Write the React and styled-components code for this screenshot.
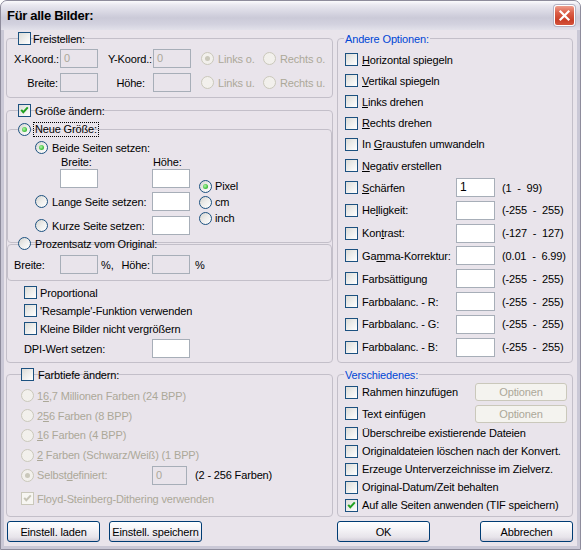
import React from "react";
import styled, { createGlobalStyle } from "styled-components";

const GlobalStyle = createGlobalStyle`
  html, body {
    margin: 0;
    padding: 0;
    background: #ffffff;
  }
  body {
    font-family: "Liberation Sans", Arial, sans-serif;
    font-size: 11px;
    letter-spacing: -0.15px;
    color: #000;
  }
  * {
    box-sizing: border-box;
  }
`;

const DIALOG_BG = "#e9e4eb";
const DISABLED = "#aca899";

const Window = styled.div`
  width: 581px;
  height: 550px;
  display: flex;
  flex-direction: column;
  border: 1px solid #8e8c9c;
  border-radius: 7px 7px 0 0;
  background: #cac8d6;
  overflow: hidden;
`;

const TitleBar = styled.div`
  flex: none;
  height: 29px;
  display: flex;
  align-items: center;
  justify-content: space-between;
  padding: 0 5px 0 6px;
  background: linear-gradient(
    to bottom,
    #fbfbfd 0%,
    #e9e8f0 14%,
    #d7d6e2 40%,
    #cbcad8 58%,
    #d3d2df 80%,
    #e2e1ea 100%
  );
`;

const TitleText = styled.div`
  font-weight: bold;
  font-size: 13px;
  letter-spacing: -0.3px;
  color: #000;
`;

const CloseButton = styled.div`
  width: 21px;
  height: 21px;
  border: 1px solid #fff;
  border-radius: 3px;
  display: flex;
  align-items: center;
  justify-content: center;
  background: linear-gradient(to bottom, #ee9d8c 0%, #dc5f48 35%, #c93f28 75%, #d5543c 100%);
  box-shadow: 0 0 0 1px #b4b2c2;
`;

const Client = styled.div`
  flex: 1;
  margin: 0 3px 3px;
  background: ${DIALOG_BG};
  display: grid;
  grid-template-columns: 327px 236px;
  column-gap: 4px;
  row-gap: 4px;
  align-content: start;
  padding: 8px 0 0 2px;
`;

const Column = styled.div`
  display: flex;
  flex-direction: column;
`;

const Group = styled.div`
  position: relative;
  flex: none;
  height: ${(p) => p.$h}px;
  margin-top: ${(p) => p.$mt || 0}px;
  border: 1px solid #c3bfc9;
  border-radius: 4px;
`;

const GroupTitle = styled.div`
  position: absolute;
  top: ${(p) => (p.$top !== undefined ? p.$top : -7)}px;
  left: ${(p) => p.$left}px;
  height: 13px;
  display: flex;
  align-items: center;
  gap: ${(p) => (p.$gap !== undefined ? p.$gap : 3)}px;
  white-space: nowrap;
  color: ${(p) => (p.$blue ? "#0046d5" : "#000")};
  background: ${(p) => (p.$blue ? DIALOG_BG : "transparent")};
  padding: ${(p) => (p.$blue ? "0 1px" : "0")};
`;

const Box = styled.span`
  flex: none;
  width: 13px;
  height: 13px;
  display: inline-flex;
  align-items: center;
  justify-content: center;
  border: 1px solid ${(p) => (p.$disabled ? "#cac8bb" : "#1c5180")};
  background: ${(p) =>
    p.$disabled
      ? "#f7f6f2"
      : "linear-gradient(135deg, #dcdcd7 0%, #ececea 45%, #ffffff 100%)"};
`;

const Circle = styled.span`
  flex: none;
  width: 13px;
  height: 13px;
  border-radius: 50%;
  display: inline-flex;
  align-items: center;
  justify-content: center;
  border: 1px solid ${(p) => (p.$disabled ? "#cac8bb" : "#1c5180")};
  background: ${(p) =>
    p.$disabled
      ? "#f2f0ec"
      : "linear-gradient(135deg, #d6d5d0 0%, #eeeeec 50%, #ffffff 100%)"};
`;

const Dot = styled.span`
  width: 5px;
  height: 5px;
  border-radius: 50%;
  background: ${(p) =>
    p.$disabled ? "#cac8bb" : "radial-gradient(circle at 40% 40%, #b4f5ac 0%, #4cc748 55%, #1f9c1f 100%)"};
`;

const CheckBox = ({ checked, disabled }) => (
  <Box $disabled={disabled}>
    {checked && (
      <svg width="11" height="11" viewBox="0 0 11 11">
        <path
          d="M2.2 4.8 L4.3 7.2 L8.8 2.4"
          fill="none"
          stroke={disabled ? "#c6c4b6" : "#21a121"}
          strokeWidth="2"
        />
      </svg>
    )}
  </Box>
);

const Radio = ({ checked, disabled }) => (
  <Circle $disabled={disabled}>{checked && <Dot $disabled={disabled} />}</Circle>
);

const Focus = styled.span`
  outline: 1px dotted #000;
  outline-offset: 0;
  padding: 0 1px;
  line-height: 13px;
`;

const Opt = styled.div`
  display: flex;
  align-items: center;
  gap: ${(p) => (p.$gap !== undefined ? p.$gap : 4)}px;
  height: ${(p) => (p.$h ? `${p.$h}px` : "auto")};
  flex: none;
  white-space: nowrap;
  color: ${(p) => (p.$disabled ? DISABLED : "inherit")};
`;

const TextBox = styled.div`
  flex: none;
  width: ${(p) => p.$w || 38}px;
  height: 19px;
  margin-left: ${(p) => p.$ml || 0}px;
  border: 1px solid #a7aeb8;
  background: ${(p) => (p.$disabled ? "transparent" : "#fff")};
  color: ${(p) => (p.$disabled ? DISABLED : "#000")};
  font-size: ${(p) => (p.$big ? "12px" : "11px")};
  padding: 0 3px;
  line-height: 17px;
`;

const Lbl = styled.div`
  white-space: nowrap;
  align-self: center;
  text-align: ${(p) => (p.$right ? "right" : "left")};
  padding-left: ${(p) => p.$pl || 0}px;
  padding-right: ${(p) => p.$pr || 0}px;
  color: ${(p) => (p.$disabled ? DISABLED : "inherit")};
`;

const Button = styled.button`
  width: ${(p) => p.$w || 93}px;
  height: ${(p) => p.$h || 21}px;
  padding: 0;
  font: inherit;
  letter-spacing: inherit;
  color: ${(p) => (p.disabled ? DISABLED : "#000")};
  border: 1px solid ${(p) => (p.disabled ? "#cac8bb" : "#003c74")};
  border-radius: 3px;
  background: ${(p) =>
    p.disabled
      ? "#f4f3ef"
      : "linear-gradient(to bottom, #ffffff 0%, #f6f5f8 35%, #e7e4ea 80%, #d2cdd8 100%)"};
`;

/* Freistellen */
const CropGrid = styled.div`
  display: grid;
  grid-template-columns: 53px 38px 55px 38px 10px 62px auto;
  grid-auto-rows: 19px;
  row-gap: 5px;
  align-items: center;
  padding-top: 10px;
`;

/* Neue Größe */
const SizeGrid = styled.div`
  display: grid;
  grid-template-columns: 144px 38px auto;
  grid-template-rows: 13px 15px 23px 24px 19px;
  padding-top: 11px;
`;

const SizeRadio = styled(Opt)`
  grid-column: ${(p) => p.$span || "1"};
  padding-left: 27px;
  height: ${(p) => p.$h || 13}px;
`;

const UnitList = styled.div`
  grid-column: 3;
  grid-row: 3 / 6;
  padding: 9px 0 0 9px;
  display: flex;
  flex-direction: column;
`;

const PercentGrid = styled.div`
  display: grid;
  grid-template-columns: 52px 38px 54px 38px auto;
  align-items: center;
  height: 19px;
  margin-top: 10px;
`;

const PercentMid = styled.div`
  display: flex;
  justify-content: space-between;
  padding: 0 2px 0 3px;
`;

const CheckList = styled.div`
  display: flex;
  flex-direction: column;
  gap: 5px;
  margin-top: 5px;
  padding-left: 17px;
`;

const DpiRow = styled.div`
  display: grid;
  grid-template-columns: 145px 38px;
  align-items: center;
  margin-top: 4px;
`;

/* Farbtiefe */
const ColorList = styled.div`
  display: flex;
  flex-direction: column;
  padding: 11px 0 0 14px;
`;

const CustomRow = styled.div`
  display: grid;
  grid-template-columns: 131px 35px auto;
  align-items: center;
  height: 19.8px;
`;

/* Right column */
const OptList = styled.div`
  display: flex;
  flex-direction: column;
  padding: 10px 0 0 7px;
`;

const AdjRow = styled.div`
  display: grid;
  grid-template-columns: 111px 39px auto;
  align-items: center;
  height: 22.8px;
`;

const Range = styled.div`
  white-space: pre;
  padding-left: 7px;
`;

const MiscList = styled.div`
  display: flex;
  flex-direction: column;
  padding: 6px 5px 0 7px;
`;

const MiscRow = styled.div`
  display: flex;
  align-items: center;
  justify-content: space-between;
  height: ${(p) => p.$h}px;
`;

const ButtonBar = styled.div`
  display: flex;
  gap: 9px;
  justify-content: ${(p) => (p.$spread ? "space-between" : "flex-start")};
  padding-left: ${(p) => (p.$spread ? 0 : 1)}px;
`;

const adjustments = [
  { label: <><u>S</u>chärfen</>, value: "1", range: "(1  -  99)" },
  { label: <>He<u>l</u>ligkeit:</>, range: "(-255  -  255)" },
  { label: <>Kon<u>t</u>rast:</>, range: "(-127  -  127)" },
  { label: <>Ga<u>m</u>ma-Korrektur:</>, range: "(0.01  -  6.99)" },
  { label: <>Farbsättigung</>, range: "(-255  -  255)" },
  { label: <>Farbbalanc. - R:</>, range: "(-255  -  255)" },
  { label: <>Farbbalanc. - G:</>, range: "(-255  -  255)" },
  { label: <>Farbbalanc. - B:</>, range: "(-255  -  255)" },
];

const flips = [
  <><u>H</u>orizontal spiegeln</>,
  <><u>V</u>ertikal spiegeln</>,
  <><u>L</u>inks drehen</>,
  <><u>R</u>echts drehen</>,
  <>In <u>G</u>raustufen umwandeln</>,
  <><u>N</u>egativ erstellen</>,
];

const misc = [
  "Überschreibe existierende Dateien",
  "Originaldateien löschen nach der Konvert.",
  "Erzeuge Unterverzeichnisse im Zielverz.",
  "Original-Datum/Zeit behalten",
];

export default function App() {
  return (
    <>
      <GlobalStyle />
      <Window>
        <TitleBar>
          <TitleText>Für alle Bilder:</TitleText>
          <CloseButton>
            <svg width="13" height="13" viewBox="0 0 13 13">
              <path d="M2.5 2.5 L10.5 10.5 M10.5 2.5 L2.5 10.5" stroke="#fff" strokeWidth="2.2" strokeLinecap="square" />
            </svg>
          </CloseButton>
        </TitleBar>

        <Client>
          <Column>
            <Group $h={60}>
              <GroupTitle $left={11} $gap={2}>
                <CheckBox />
                Freistellen:
              </GroupTitle>
              <CropGrid>
                <Lbl $right $pr={1}>X-Koord.:</Lbl>
                <TextBox $disabled>0</TextBox>
                <Lbl $right $pr={1}>Y-Koord.:</Lbl>
                <TextBox $disabled>0</TextBox>
                <span />
                <Opt $disabled>
                  <Radio checked disabled />
                  Links o.
                </Opt>
                <Opt $disabled>
                  <Radio disabled />
                  Rechts o.
                </Opt>
                <Lbl $right $pr={2}>Breite:</Lbl>
                <TextBox $disabled />
                <Lbl $right $pr={8}>Höhe:</Lbl>
                <TextBox $disabled />
                <span />
                <Opt $disabled>
                  <Radio disabled />
                  Links u.
                </Opt>
                <Opt $disabled>
                  <Radio disabled />
                  Rechts u.
                </Opt>
              </CropGrid>
            </Group>

            <Group $h={253} $mt={12}>
              <GroupTitle $left={11} $gap={4}>
                <CheckBox checked />
                Größe ändern:
              </GroupTitle>

              <Group $h={114} $mt={18}>
                <GroupTitle $left={10} $gap={3}>
                  <Radio checked />
                  <Focus>Neue Größe:</Focus>
                </GroupTitle>
                <SizeGrid>
                  <SizeRadio $span="1 / 4">
                    <Radio checked />
                    Beide Seiten setzen:
                  </SizeRadio>
                  <Lbl $pl={53}>Breite:</Lbl>
                  <Lbl $pl={1}>Höhe:</Lbl>
                  <span />
                  <TextBox $ml={52} />
                  <TextBox />
                  <UnitList>
                    <Opt $h={16} $gap={3}>
                      <Radio checked />
                      Pixel
                    </Opt>
                    <Opt $h={16} $gap={3}>
                      <Radio />
                      cm
                    </Opt>
                    <Opt $h={16} $gap={3}>
                      <Radio />
                      inch
                    </Opt>
                  </UnitList>
                  <SizeRadio $h={19}>
                    <Radio />
                    Lange Seite setzen:
                  </SizeRadio>
                  <TextBox />
                  <SizeRadio $h={19}>
                    <Radio />
                    Kurze Seite setzen:
                  </SizeRadio>
                  <TextBox />
                </SizeGrid>
              </Group>

              <Group $h={37} $mt={1}>
                <GroupTitle $left={10} $top={-8} $gap={4}>
                  <Radio />
                  Prozentsatz vom Original:
                </GroupTitle>
                <PercentGrid>
                  <Lbl $pl={6}>Breite:</Lbl>
                  <TextBox $disabled />
                  <PercentMid>
                    <span>%,</span>
                    <span>Höhe:</span>
                  </PercentMid>
                  <TextBox $disabled />
                  <Lbl $pl={5}>%</Lbl>
                </PercentGrid>
              </Group>

              <CheckList>
                <Opt $h={13} $gap={3}>
                  <CheckBox />
                  Proportional
                </Opt>
                <Opt $h={13} $gap={3}>
                  <CheckBox />
                  'Resample'-Funktion verwenden
                </Opt>
                <Opt $h={13} $gap={3}>
                  <CheckBox />
                  Kleine Bilder nicht vergrößern
                </Opt>
              </CheckList>
              <DpiRow>
                <Lbl $pl={17}>DPI-Wert setzen:</Lbl>
                <TextBox />
              </DpiRow>
            </Group>

            <Group $h={143} $mt={11}>
              <GroupTitle $left={14} $gap={4}>
                <CheckBox />
                Farbtiefe ändern:
              </GroupTitle>
              <ColorList>
                <Opt $h={19.8} $gap={3} $disabled>
                  <Radio disabled />
                  <span>1<u>6</u>,7 Millionen Farben (24 BPP)</span>
                </Opt>
                <Opt $h={19.8} $gap={3} $disabled>
                  <Radio disabled />
                  <span>2<u>5</u>6 Farben (8 BPP)</span>
                </Opt>
                <Opt $h={19.8} $gap={3} $disabled>
                  <Radio disabled />
                  <span><u>1</u>6 Farben (4 BPP)</span>
                </Opt>
                <Opt $h={19.8} $gap={3} $disabled>
                  <Radio disabled />
                  <span><u>2</u> Farben (Schwarz/Weiß) (1 BPP)</span>
                </Opt>
                <CustomRow>
                  <Opt $gap={3} $disabled>
                    <Radio checked disabled />
                    <span>Selbst<u>d</u>efiniert:</span>
                  </Opt>
                  <TextBox $w={35} $disabled>0</TextBox>
                  <Lbl $pl={8}>(2 - 256 Farben)</Lbl>
                </CustomRow>
                <Opt $h={20} $gap={3} $disabled style={{ marginTop: 4 }}>
                  <CheckBox checked disabled />
                  Floyd-Steinberg-Dithering verwenden
                </Opt>
              </ColorList>
            </Group>
          </Column>

          <Column>
            <Group $h={325}>
              <GroupTitle $left={6} $blue>Andere Optionen:</GroupTitle>
              <OptList>
                {flips.map((label, i) => (
                  <Opt key={i} $h={21.2}>
                    <CheckBox />
                    <span>{label}</span>
                  </Opt>
                ))}
                {adjustments.map((a, i) => (
                  <AdjRow key={i}>
                    <Opt>
                      <CheckBox />
                      <span>{a.label}</span>
                    </Opt>
                    <TextBox $w={39} $big>{a.value}</TextBox>
                    <Range>{a.range}</Range>
                  </AdjRow>
                ))}
              </OptList>
            </Group>

            <Group $h={143} $mt={11}>
              <GroupTitle $left={6} $blue>Verschiedenes:</GroupTitle>
              <MiscList>
                <MiscRow $h={22}>
                  <Opt>
                    <CheckBox />
                    Rahmen hinzufügen
                  </Opt>
                  <Button disabled $w={92} $h={18}>Optionen</Button>
                </MiscRow>
                <MiscRow $h={21}>
                  <Opt>
                    <CheckBox />
                    Text einfügen
                  </Opt>
                  <Button disabled $w={92} $h={18}>Optionen</Button>
                </MiscRow>
                {misc.map((t) => (
                  <Opt key={t} $h={18}>
                    <CheckBox />
                    {t}
                  </Opt>
                ))}
                <Opt $h={18}>
                  <CheckBox checked />
                  Auf alle Seiten anwenden (TIF speichern)
                </Opt>
              </MiscList>
            </Group>
          </Column>

          <ButtonBar>
            <Button>Einstell. laden</Button>
            <Button>Einstell. speichern</Button>
          </ButtonBar>
          <ButtonBar $spread>
            <Button>OK</Button>
            <Button>Abbrechen</Button>
          </ButtonBar>
        </Client>
      </Window>
    </>
  );
}
